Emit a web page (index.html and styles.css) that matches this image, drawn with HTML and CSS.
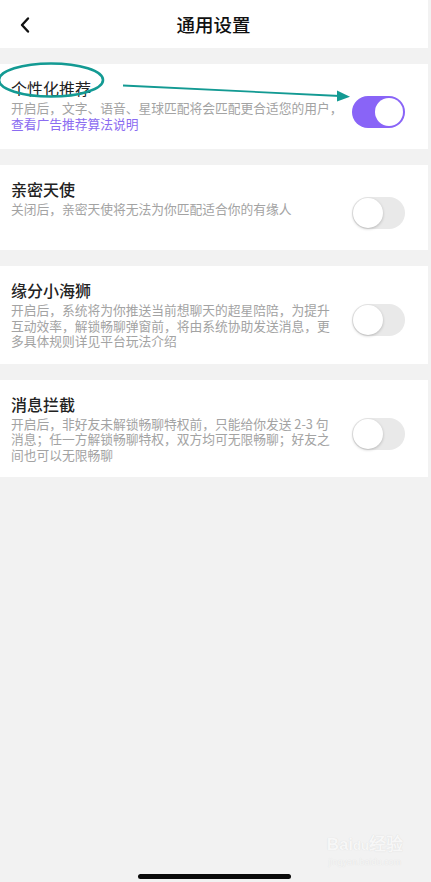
FILE: index.html
```html
<!DOCTYPE html>
<html lang="zh-CN">
<head>
<meta charset="utf-8">
<title>通用设置</title>
<link rel="stylesheet" href="styles.css">
</head>
<body>
<div class="page">
  <header class="header">
    <svg class="back" width="12" height="18" viewBox="0 0 12 18"><path d="M9 2.5 L3 9 L9 15.5" fill="none" stroke="#111" stroke-width="2.4" stroke-linecap="round" stroke-linejoin="round"/></svg>
    <h1 class="title">通用设置</h1>
  </header>

  <section class="card">
    <div class="text">
      <div class="name light">个性化推荐</div>
      <div class="desc">开启后，文字、语音、星球匹配将会匹配更合适您的用户，<br><span class="link">查看广告推荐算法说明</span></div>
    </div>
    <div class="toggle on"><span class="knob"></span></div>
  </section>

  <section class="card">
    <div class="text">
      <div class="name">亲密天使</div>
      <div class="desc">关闭后，亲密天使将无法为你匹配适合你的有缘人</div>
    </div>
    <div class="toggle"><span class="knob"></span></div>
  </section>

  <section class="card card--multi">
    <div class="text">
      <div class="name">缘分小海狮</div>
      <div class="desc">开启后，系统将为你推送当前想聊天的超星陪陪，为提升<br>互动效率，解锁畅聊弹窗前，将由系统协助发送消息，更<br>多具体规则详见平台玩法介绍</div>
    </div>
    <div class="toggle"><span class="knob"></span></div>
  </section>

  <section class="card card--multi">
    <div class="text">
      <div class="name">消息拦截</div>
      <div class="desc">开启后，非好友未解锁畅聊特权前，只能给你发送 2-3 句<br>消息；任一方解锁畅聊特权，双方均可无限畅聊；好友之<br>间也可以无限畅聊</div>
    </div>
    <div class="toggle"><span class="knob"></span></div>
  </section>

  <div class="filler">
    <div class="watermark">
      <div class="wm-top">Bai<span class="wm-du">du</span>经验</div>
      <div class="wm-url">jingyan.baidu.com</div>
    </div>
    <div class="home-bar"></div>
  </div>

  <svg class="annotation" width="431" height="120" viewBox="0 0 431 120">
    <ellipse cx="51" cy="80" rx="52" ry="16.5" fill="none" stroke="#139a93" stroke-width="2.6"/>
    <line x1="123" y1="85.5" x2="340" y2="96" stroke="#139a93" stroke-width="1.8"/>
    <polygon points="337,90.5 350,96.7 337,101.5" fill="#139a93"/>
  </svg>
</div>
</body>
</html>
```

FILE: styles.css
```css
* { box-sizing: border-box; }

html, body {
  margin: 0;
  padding: 0;
  background: #f2f2f2;
}

body {
  font-family: "Noto Sans CJK SC", "Noto Sans", sans-serif;
  color: #222;
}

.page {
  position: relative;
  width: 431px;
  height: 882px;
  display: flex;
  flex-direction: column;
  overflow: hidden;
}

.header {
  position: relative;
  height: 48px;
  width: 428px;
  background: #fff;
  display: flex;
  align-items: center;
  justify-content: center;
  margin-bottom: 16px;
}

.back {
  position: absolute;
  left: 19px;
  top: 16px;
}

.title {
  margin: 0 0 0 -1px;
  font-size: 18.5px;
  font-weight: 500;
  color: #111;
  line-height: 24px;
}

.card {
  width: 428px;
  background: #fff;
  min-height: 85px;
  padding: 12px 23px 15px 11px;
  display: flex;
  align-items: flex-start;
  justify-content: space-between;
  margin-bottom: 16px;
}

.text {
  flex: 1;
}

.name {
  font-size: 16px;
  line-height: 24px;
  font-weight: 500;
  color: #222;
}

.name.light {
  font-weight: 400;
}

.desc {
  font-size: 12.75px;
  line-height: 15.5px;
  color: #a3a3a3;
  white-space: nowrap;
}

.link {
  color: #8b6cf1;
}

.toggle {
  flex: none;
  width: 53px;
  height: 32px;
  border-radius: 16px;
  background: #e9e9e9;
  margin-top: 20px;
  position: relative;
  display: flex;
  align-items: center;
  padding: 0 1px;
}

.card--multi .toggle {
  margin-top: 26px;
}

.knob {
  width: 30px;
  height: 30px;
  border-radius: 50%;
  background: #fff;
  box-shadow: 0 1px 3px rgba(0, 0, 0, 0.22);
}

.toggle.on {
  background: #8964f7;
  justify-content: flex-end;
  padding: 0 2px;
}

.toggle.on .knob {
  width: 28px;
  height: 28px;
  box-shadow: none;
}

.filler {
  flex: 1;
  position: relative;
  display: flex;
  flex-direction: column;
  justify-content: flex-end;
  align-items: center;
  padding-bottom: 3px;
}

.home-bar {
  width: 153px;
  height: 5px;
  border-radius: 3px;
  background: #0a0a0a;
  margin-left: -3px;
}

.watermark {
  position: absolute;
  right: 28px;
  bottom: 14px;
  text-align: center;
  color: #f7f7f7;
  text-shadow: 0 0 1px #d6d6d6;
  font-family: "Liberation Sans", sans-serif;
}

.wm-top {
  font-size: 17px;
  font-weight: 700;
  line-height: 20px;
}

.wm-du {
  font-size: 13px;
}

.wm-url {
  font-size: 9px;
  line-height: 12px;
}

.annotation {
  position: absolute;
  left: 0;
  top: 0;
  pointer-events: none;
}
```
